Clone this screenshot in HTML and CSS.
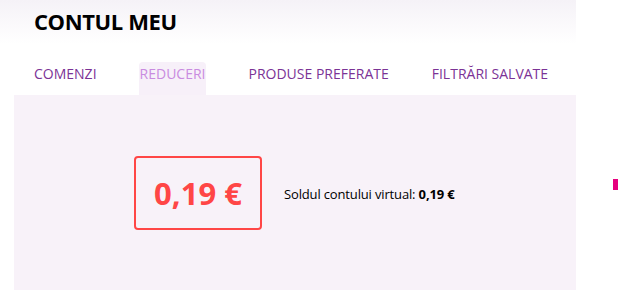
FILE: index.html
```html
<!DOCTYPE html>
<html lang="ro">
<head>
    <meta charset="UTF-8">
    <title>Contul meu</title>
    <link rel="stylesheet" href="styles.css">
</head>
<body>
    <div class="page">
        <div class="header">
            <h1>CONTUL MEU</h1>
        </div>

        <ul class="tabs">
            <li class="tab">COMENZI</li>
            <li class="tab active">REDUCERI</li>
            <li class="tab">PRODUSE PREFERATE</li>
            <li class="tab">FILTRĂRI SALVATE</li>
        </ul>

        <div class="panel">
            <div class="balance-box">0,19 €</div>
            <div class="balance-text">Soldul contului virtual: <b>0,19 €</b></div>
        </div>
    </div>

    <div class="side-mark"></div>
</body>
</html>
```

FILE: styles.css
```css
body {
    margin: 0;
    font-family: "Open Sans", "Noto Sans", sans-serif;
    background: #fff;
    color: #000;
}

.page {
    width: 576px;
}

.header {
    height: 44px;
    background: linear-gradient(180deg, #f5f2f7 0%, #ffffff 100%);
    padding-left: 34px;
}

.header h1 {
    margin: 0;
    padding-top: 6px;
    font-size: 22px;
    font-weight: 700;
    letter-spacing: -0.4px;
    line-height: 30px;
}

.tabs {
    list-style: none;
    margin: 0;
    padding: 18px 0 0 33px;
    display: flex;
    gap: 41px;
}

.tab {
    padding: 0 1px;
    height: 33px;
    line-height: 24px;
    font-size: 14px;
    color: #7b3396;
    border-radius: 4px 4px 0 0;
}

.tab.active {
    background: #f7f0f9;
    color: #c98be0;
}

.panel {
    margin-left: 14px;
    height: 195px;
    background: #f8f2f9;
    display: flex;
    align-items: center;
    padding-left: 120px;
    gap: 22px;
}

.balance-box {
    width: 124px;
    height: 70px;
    border: 2px solid #ff4646;
    border-radius: 4px;
    display: flex;
    align-items: center;
    justify-content: center;
    font-size: 31px;
    font-weight: 700;
    color: #ff4646;
}

.balance-text {
    font-size: 13px;
    letter-spacing: -0.15px;
    margin-top: 2px;
}

.side-mark {
    position: absolute;
    left: 613px;
    top: 179px;
    width: 5px;
    height: 11px;
    background: #e6007e;
}
```
